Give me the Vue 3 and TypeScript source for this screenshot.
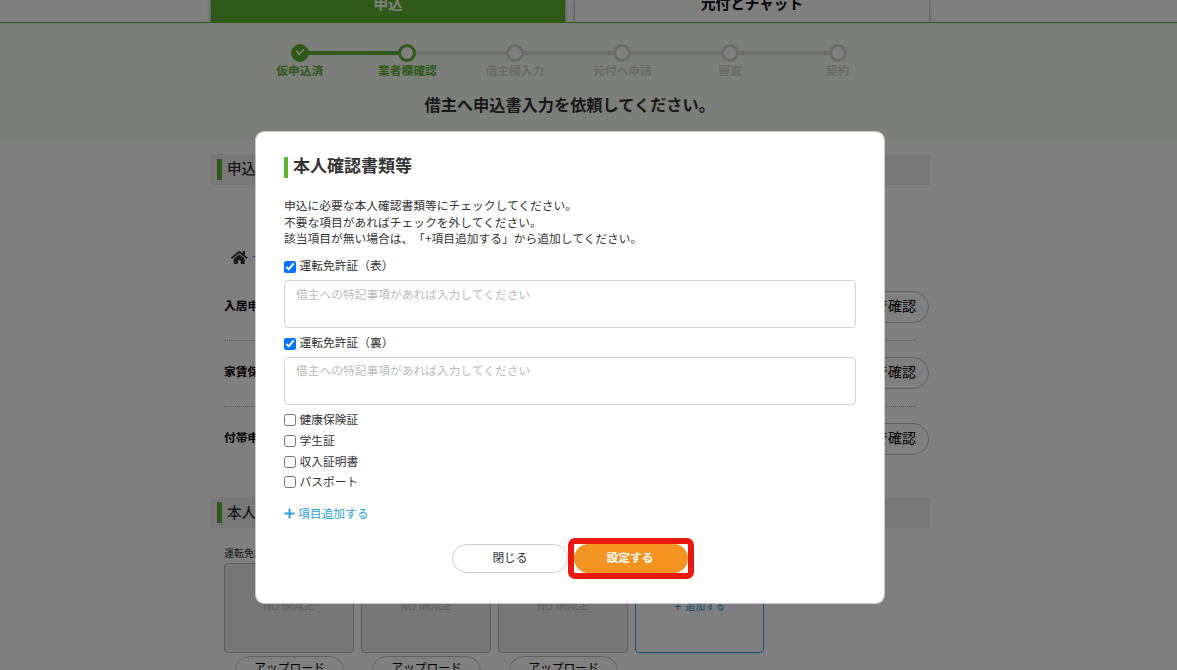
<script setup lang="ts">
import { ref } from 'vue'

interface Step { label: string; state: 'done' | 'current' | 'todo' }
interface Doc { label: string; checked: boolean }

const steps: Step[] = [
  { label: '仮申込済', state: 'done' },
  { label: '業者欄確認', state: 'current' },
  { label: '借主欄入力', state: 'todo' },
  { label: '元付へ申請', state: 'todo' },
  { label: '審査', state: 'todo' },
  { label: '契約', state: 'todo' },
]
const forms: string[] = ['入居申込書', '家賃保証', '付帯申込書']
const docs = ref<Doc[]>([
  { label: '運転免許証（表）', checked: true },
  { label: '運転免許証（裏）', checked: true },
  { label: '健康保険証', checked: false },
  { label: '学生証', checked: false },
  { label: '収入証明書', checked: false },
  { label: 'パスポート', checked: false },
])
</script>

<template>
  <div class="screen">
    <div class="page">
      <nav class="tabs">
        <div class="tab active">申込</div>
        <div class="tab">元付とチャット</div>
      </nav>
      <header class="band">
        <ol class="steps">
          <li v-for="s in steps" :key="s.label" class="step" :class="s.state">
            <span class="dot">
              <svg v-if="s.state === 'done'" viewBox="0 0 18 18"><path d="M5.5 6.5 8 10.3 13.2 5" fill="none" stroke="#fff" stroke-width="1.5" /></svg>
            </span>
            <span class="step-label">{{ s.label }}</span>
          </li>
        </ol>
        <h1>借主へ申込書入力を依頼してください。</h1>
      </header>
      <main class="column">
        <h2 class="section first"><span>申込書類</span></h2>
        <div class="home">
          <svg viewBox="0 0 576 512"><path fill="#333" d="M280 148 96 300v164c0 9 7 16 16 16h112c9 0 16-7 16-16v-96c0-9 7-16 16-16h64c9 0 16 7 16 16v96c0 9 7 16 16 16h112c9 0 16-7 16-16V300L296 148c-5-4-11-4-16 0zM572 251l-84-69V44c0-7-5-12-12-12h-56c-7 0-12 5-12 12v72l-90-74c-18-14-43-14-61 0L4 251c-5 4-6 12-2 17l26 31c4 5 12 6 17 2L280 107c5-4 11-4 16 0l235 194c5 4 13 3 17-2l26-31c4-5 3-13-2-17z" /></svg>
          <span>一括</span>
        </div>
        <div class="forms">
          <div v-for="f in forms" :key="f" class="form-row">
            <b>{{ f }}</b>
            <span class="pill">PDFで確認</span>
          </div>
        </div>
        <h2 class="section"><span>本人確認書類</span></h2>
        <div class="photo-title">運転免許証</div>
        <div class="photos">
          <div v-for="n in 3" :key="n" class="photo">
            <div class="box">NO IMAGE</div>
            <div class="upload">アップロード</div>
          </div>
          <div class="photo"><div class="box add">+ 追加する</div></div>
        </div>
      </main>
    </div>

    <div class="backdrop">
      <section class="modal">
        <h2 class="title">本人確認書類等</h2>
        <p class="lead">
          申込に必要な本人確認書類等にチェックしてください。<br />
          不要な項目があればチェックを外してください。<br />
          該当項目が無い場合は、「+項目追加する」から追加してください。
        </p>
        <div v-for="d in docs" :key="d.label" class="doc" :class="{ open: d.checked }">
          <label>
            <input v-model="d.checked" type="checkbox" />
            <span>{{ d.label }}</span>
          </label>
          <textarea v-if="d.checked" placeholder="借主への特記事項があれば入力してください"></textarea>
        </div>
        <a class="more">
          <svg viewBox="0 0 11 11"><path d="M5.5 .5v10M.5 5.5h10" stroke="#2a9fdc" stroke-width="2" /></svg>
          <span>項目追加する</span>
        </a>
        <div class="actions">
          <button class="close">閉じる</button>
          <div class="highlight"><button class="submit">設定する</button></div>
        </div>
      </section>
    </div>
  </div>
</template>

<style>
html, body { margin: 0; overflow: hidden; }
</style>

<style scoped>
* { box-sizing: border-box; }
.screen {
  position: relative; width: 1177px; height: 670px; overflow: hidden; background: #fff;
  font-family: "Noto Sans CJK JP", "Noto Sans", sans-serif; font-size: 11.75px; color: #333;
  text-spacing-trim: space-all;
}
h1, h2, p, ol { margin: 0; padding: 0; }
.tabs { display: flex; gap: 8px; height: 23px; padding-left: 210px; border-bottom: 1px solid #5ab62e; }
.tab {
  width: 356px; height: 22px; border: 1px solid #ccc; border-width: 0 1px; box-shadow: 0 0 4px rgba(0, 0, 0, .2);
  clip-path: inset(0 -5px); text-align: center; line-height: 5px; font-size: 14.6px; font-weight: 700; color: #000;
}
.tab.active { background: #5ab62e; color: #fff; }
.band { height: 117px; background: #f8fcf5; padding: 21px 0 0 246px; }
.steps { display: flex; width: 645.4px; list-style: none; }
.step {
  position: relative; flex: 1; display: flex; flex-direction: column; align-items: center; color: #d8d8d8;
}
.step + .step::before {
  content: ""; position: absolute; top: 7px; left: calc(-50% + 9px); right: calc(50% + 9px); height: 4px; background: #dfe1dd;
}
.step.current::before { background: #5ab62e !important; }
.dot { width: 18px; height: 18px; border: 3px solid #d8d8d8; border-radius: 50%; background: #fff; }
.dot svg { display: block; width: 18px; height: 18px; margin: -3px; }
.done .dot, .current .dot { border-color: #5ab62e; }
.done .dot { background: #5ab62e; }
.done, .current { color: #5ab62e; }
.step-label { height: 18px; line-height: 16px; font-weight: 700; white-space: nowrap; }
h1 { width: 646px; padding-left: 178.5px; margin-top: 12px; font-size: 16.2px; line-height: 24px; font-weight: 700; white-space: nowrap; }
.column { width: 720px; margin-left: 210px; padding-top: 14px; }
.section {
  display: flex; align-items: center; height: 31px; padding-left: 7px; background: #f0f0f0;
  font-size: 14.6px; line-height: 21px; font-weight: 500;
}
.section span { padding-bottom: 3px; }
.section.first span { padding-bottom: 5px; }
.section::before { content: ""; width: 5px; height: 21px; margin-right: 5px; background: #5ab62e; }
.home { display: flex; align-items: center; gap: 5px; height: 16px; margin: 64px 0 0 21px; color: #2a9fdc; }
.home svg { width: 16.5px; height: 15px; }
.home span { padding-bottom: 4px; }
.forms { margin-top: 10px; height: 222px; padding-left: 14px; }
.form-row { position: relative; display: flex; align-items: center; justify-content: space-between; height: 66px; width: 705px; color: #000; padding-bottom: 2px; }
.form-row:not(:last-child)::after { content: ""; position: absolute; left: 0; right: 13px; bottom: 0; border-bottom: 1px dotted #bbb; }
.form-row b { line-height: 18px; padding-bottom: 4px; }
.pill { height: 32px; padding: 0 12px; border: 1px solid #c4c4c4; border-radius: 17px; font-size: 14px; line-height: 27px; }
.photo-title { margin: 17px 0 0 14px; font-size: 10px; line-height: 16px; }
.photos { display: flex; gap: 7px; margin: 2px 0 0 14px; }
.photo { width: 130px; }
.box {
  height: 90px; border: 1px solid #bdbdbd; border-radius: 4px; background: #eee; text-align: center;
  color: #c4c4c4; font: 10px/86px "DejaVu Sans", "Noto Sans CJK JP", sans-serif;
}
.box.add { width: 129px; background: #fff; border-color: #2aa9e0; color: #2a9fdc; }
.upload { width: 109px; height: 29px; margin: 3px auto 0 11px; border: 1px solid #c4c4c4; border-radius: 15px; text-align: center; line-height: 20px; color: #000; }

.backdrop { position: absolute; inset: 0; background: rgba(0, 0, 0, .5); padding: 131px 0 0 255px; }
.modal {
  width: 630px; height: 473px; padding: 25px 28px; background: #fff; background-clip: padding-box;
  border: 1px solid rgba(255, 255, 255, .6); border-radius: 9px;
}
.title { display: flex; align-items: center; height: 21px; border-left: 4px solid #5ab62e; padding: 0 0 6px 5px; font-size: 17px; line-height: 15px; font-weight: 700; }
.lead { margin: 19px 0 10px; line-height: 16.5px; }
.doc { height: 20.8px; }
.doc.open { height: 77px; }
label { display: flex; align-items: center; gap: 3.5px; height: 17px; line-height: 17px; }
label span { padding-bottom: 1px; }
input { width: 12px; height: 12px; margin: 2px 0 0; accent-color: #0075ff; }
.open input { margin-top: 3px; }
textarea {
  display: block; width: 572px; height: 48px; margin-top: 6px; padding: 4px 11px; border: 1px solid #ced4da; border-radius: 4px;
  resize: none; font: inherit; line-height: 17px; overflow: hidden;
}
.doc.open + .doc.open textarea { padding-top: 3px; }
textarea::placeholder { color: #bbb; opacity: 1; }
.more { display: flex; align-items: center; gap: 3px; height: 18px; margin-top: 11px; line-height: 16px; color: #2a9fdc; }
.more svg { width: 11px; height: 11px; }
.more span { padding-bottom: 2px; }
.actions { display: flex; align-items: center; margin: 15px 0 0 168px; }
button { font: inherit; line-height: 24px; padding: 0 0 3px; height: 29px; border-radius: 15px; }
.close { width: 116px; border: 1px solid #ccc; background: #fff; color: #333; }
.highlight { display: flex; width: 126px; height: 41px; border: 6px solid #e9190f; border-radius: 7px; align-items: center; }
.submit { width: 114px; padding-right: 2px; border: 0; background: #f39321; color: #fff; font-weight: 700; }
</style>
